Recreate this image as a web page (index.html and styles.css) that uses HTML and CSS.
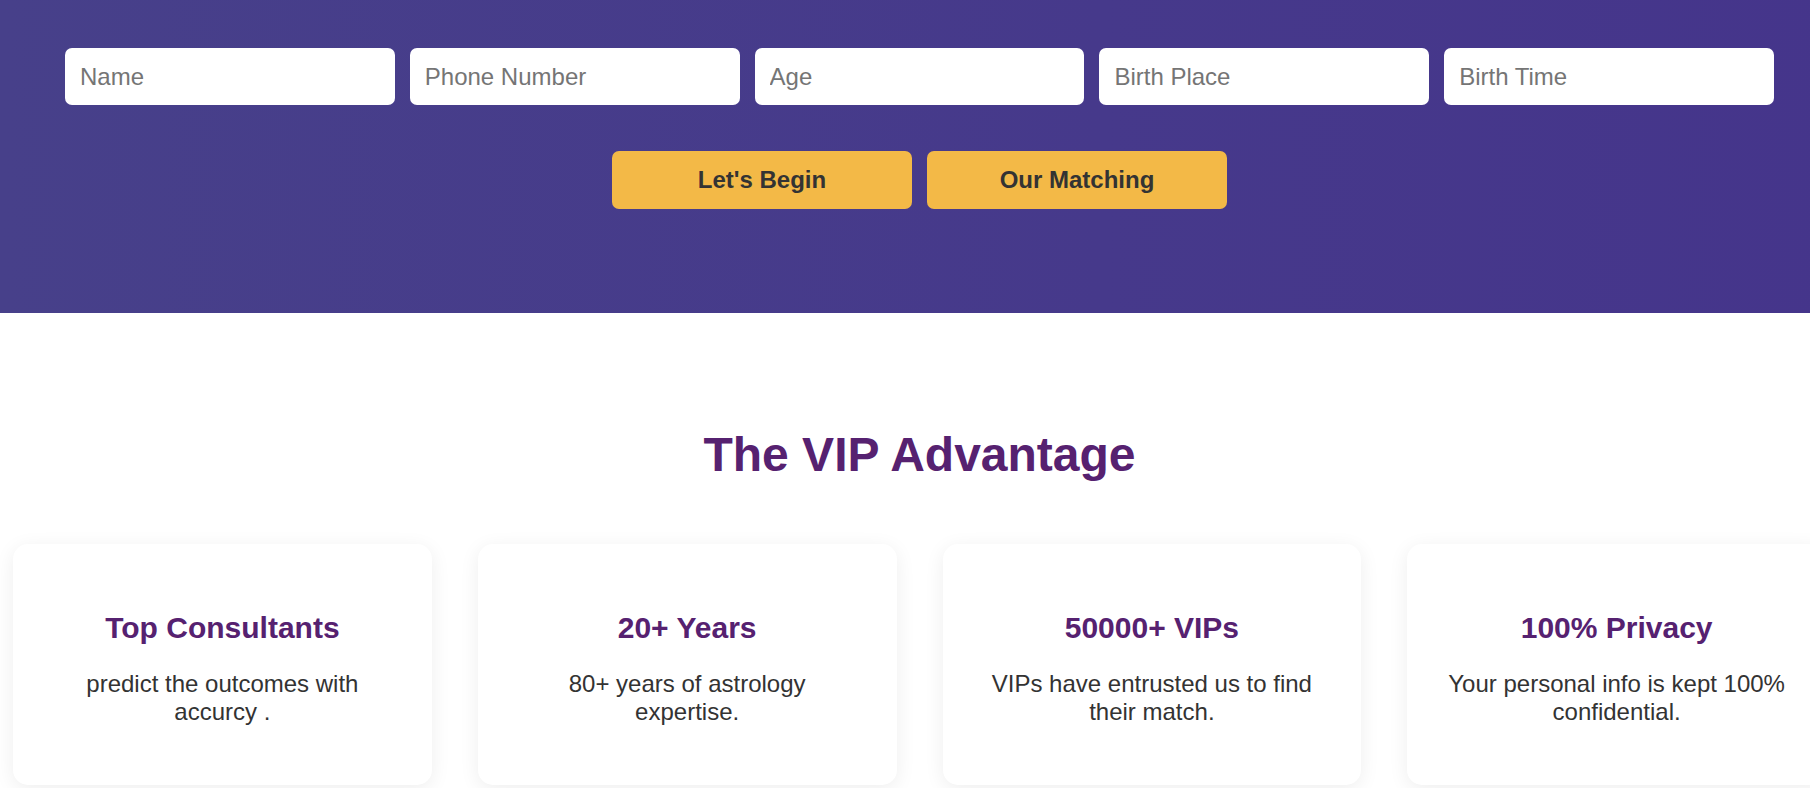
FILE: index.html
```html
<!DOCTYPE html>
<html lang="en">
<head>
<meta charset="utf-8">
<title>VIP Matching</title>
<link rel="stylesheet" href="styles.css">
</head>
<body>
<div class="page">
  <header class="hero">
    <form class="form">
      <div class="fields">
        <input class="field" type="text" placeholder="Name">
        <input class="field" type="text" placeholder="Phone Number">
        <input class="field" type="text" placeholder="Age">
        <input class="field" type="text" placeholder="Birth Place">
        <input class="field" type="text" placeholder="Birth Time">
      </div>
      <div class="actions">
        <button class="btn" type="button">Let's Begin</button>
        <button class="btn" type="button">Our Matching</button>
      </div>
    </form>
  </header>
  <section class="advantage">
    <h2 class="advantage-title">The VIP Advantage</h2>
    <div class="cards">
      <div class="card">
        <h3 class="card-title">Top Consultants</h3>
        <p class="card-text">predict the outcomes with accurcy .</p>
      </div>
      <div class="card">
        <h3 class="card-title">20+ Years</h3>
        <p class="card-text">80+ years of astrology expertise.</p>
      </div>
      <div class="card">
        <h3 class="card-title">50000+ VIPs</h3>
        <p class="card-text">VIPs have entrusted us to find their match.</p>
      </div>
      <div class="card">
        <h3 class="card-title">100% Privacy</h3>
        <p class="card-text">Your personal info is kept 100% confidential.</p>
      </div>
    </div>
  </section>
</div>
</body>
</html>
```
FILE: styles.css
```css
html, body {
  margin: 0;
  padding: 0;
  overflow-x: hidden;
  background: #ffffff;
}

body {
  font-family: "Liberation Sans", Arial, sans-serif;
  color: #333333;
}

.page {
  width: 1839px;
}

.hero {
  background: linear-gradient(90deg, #47408a 0%, #46398b 60%, #45358b 100%);
  padding: 48px 65px 104px;
}

.form {
  margin: 0;
}

.fields {
  display: grid;
  grid-template-columns: repeat(5, 1fr);
  gap: 15px;
}

.field {
  height: 57px;
  box-sizing: border-box;
  border: none;
  border-radius: 7px;
  padding: 0 15px;
  font-family: "Liberation Sans", Arial, sans-serif;
  font-size: 24px;
  color: #333333;
  background: #ffffff;
  outline: none;
  min-width: 0;
}

.field::placeholder {
  color: #757575;
}

.actions {
  display: flex;
  justify-content: center;
  gap: 15px;
  margin-top: 46px;
}

.btn {
  width: 300px;
  height: 58px;
  border: none;
  border-radius: 7px;
  background: #f3b947;
  color: #333333;
  font-family: "Liberation Sans", Arial, sans-serif;
  font-size: 24px;
  font-weight: bold;
  cursor: pointer;
}

.advantage {
  padding: 114px 13px 40px;
}

.advantage-title {
  margin: 0 0 62px;
  text-align: center;
  font-size: 48px;
  line-height: 55px;
  font-weight: bold;
  color: #562170;
}

.cards {
  display: grid;
  grid-template-columns: repeat(4, 1fr);
  gap: 46px;
}

.card {
  background: #ffffff;
  border-radius: 15px;
  box-shadow: 0 4px 20px rgba(0, 0, 0, 0.07);
  padding: 67px 38px 59px;
  text-align: center;
}

.card-title {
  margin: 0;
  font-size: 30px;
  line-height: 34px;
  font-weight: bold;
  color: #562170;
}

.card-text {
  margin: 25px 0 0;
  font-size: 24px;
  line-height: 28px;
  color: #333333;
}
```
